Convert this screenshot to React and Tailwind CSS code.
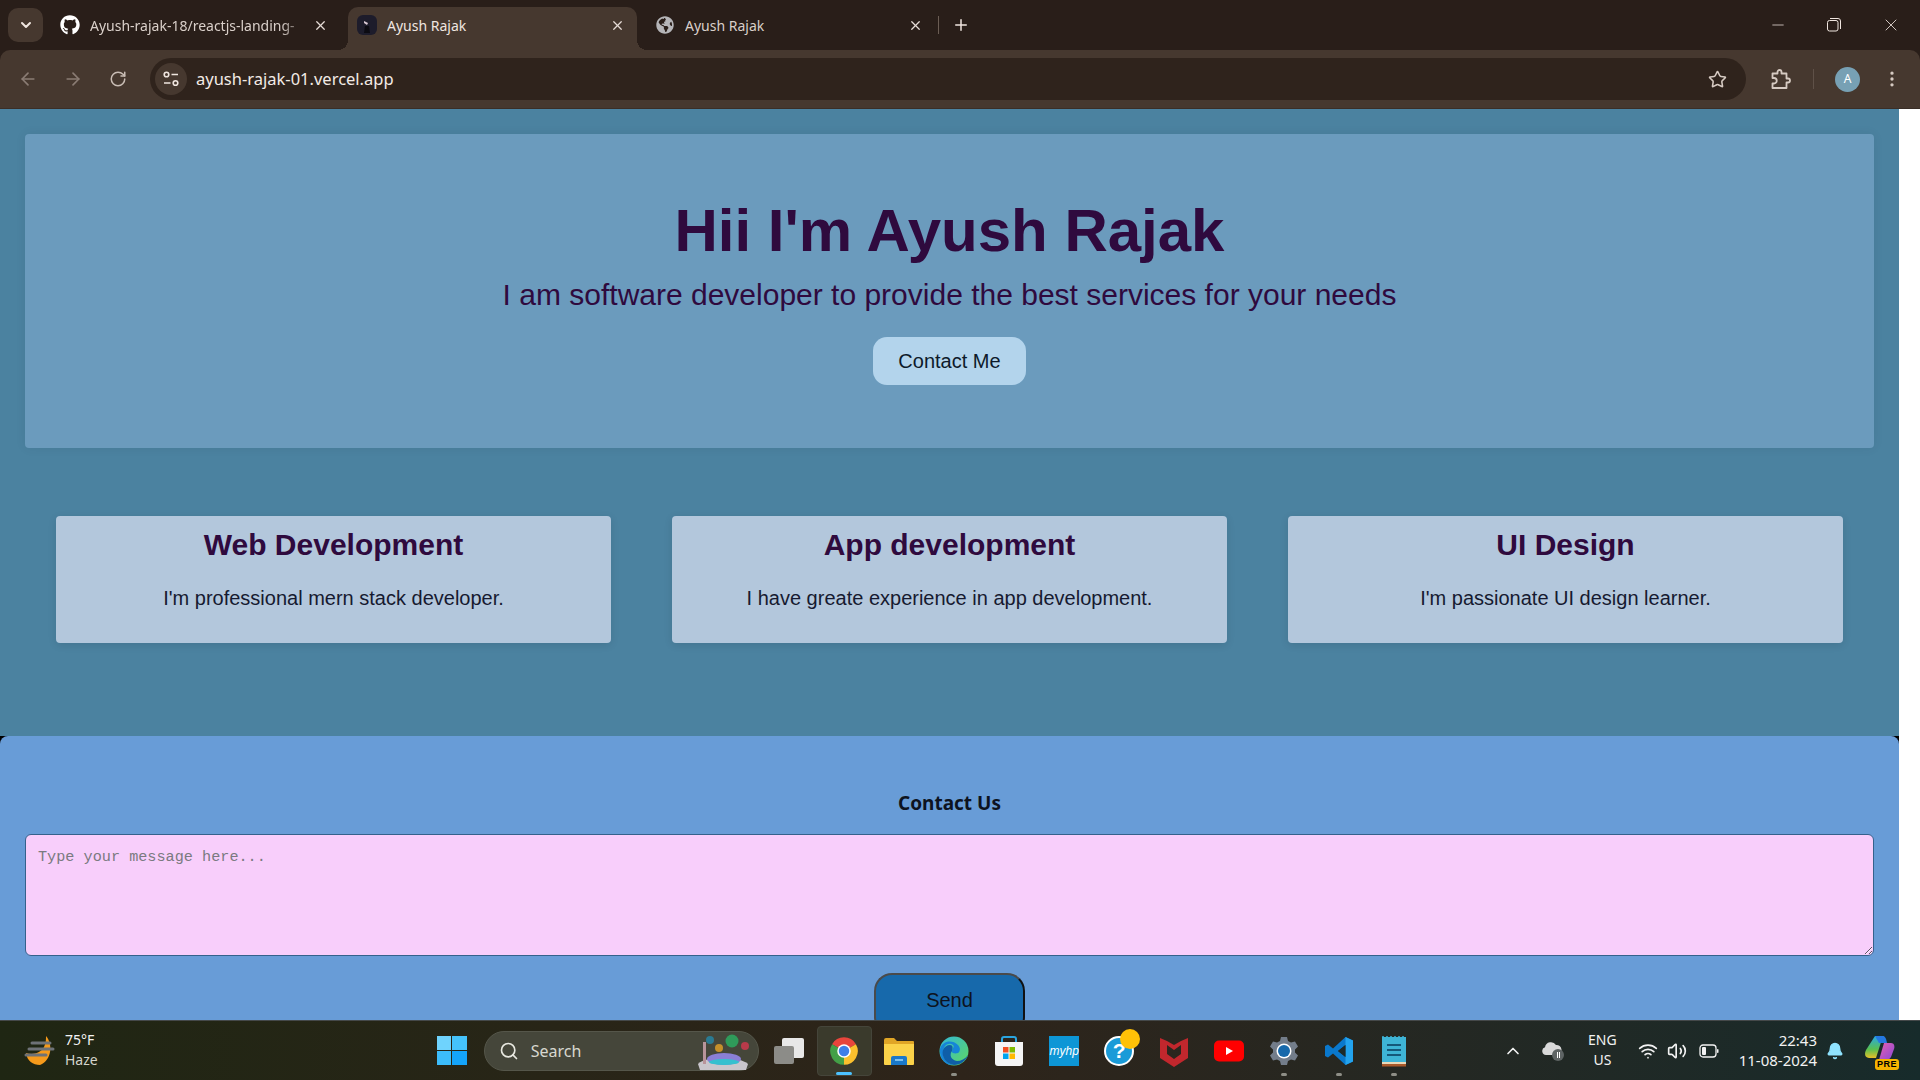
import React from "react";
import {
  ArrowLeft,
  ArrowRight,
  RotateCw,
  ChevronDown,
  ChevronUp,
  X,
  Plus,
  Minus,
  Star,
  EllipsisVertical,
  Search,
  Wifi,
  Volume2,
  Bell,
} from "lucide-react";
import { FaGithub, FaGlobeAmericas } from "react-icons/fa";

const cards = [
  { title: "Web Development", text: "I'm professional mern stack developer." },
  { title: "App development", text: "I have greate experience in app development." },
  { title: "UI Design", text: "I'm passionate UI design learner." },
];

function Tab({ icon, title, active, fade, className }) {
  return (
    <div
      className={`relative flex items-center h-[43px] pb-[7px] ${className} ${
        active ? "bg-[#46382f] rounded-t-[10px]" : ""
      }`}
    >
      <span className="w-[20px] h-[20px] flex items-center justify-center shrink-0">{icon}</span>
      <span
        className={`ml-[10px] text-[14px] flex-1 overflow-hidden whitespace-nowrap ${
          active ? "text-[#f0e6e0]" : "text-[#d9cfc9]"
        }`}
        style={fade ? { maskImage: "linear-gradient(to right, black 88%, transparent)" } : undefined}
      >
        {title}
      </span>
      <X size={15} strokeWidth={2} className="text-[#e6dcd6] shrink-0 ml-[6px]" />
      {active && (
        <>
          <span className="absolute bottom-0 left-[-10px] w-[10px] h-[10px] bg-[radial-gradient(circle_at_0_0,transparent_10px,#46382f_10px)]" />
          <span className="absolute bottom-0 right-[-10px] w-[10px] h-[10px] bg-[radial-gradient(circle_at_100%_0,transparent_10px,#46382f_10px)]" />
        </>
      )}
    </div>
  );
}

function TabFavicon() {
  return (
    <svg width="20" height="20" viewBox="0 0 20 20">
      <rect width="20" height="20" rx="6" fill="#1d1c2b" />
      <path d="M7 6l4 2-1 2-3-2z" fill="#d9c8d4" />
      <path d="M8 11h4l1 7H7z" fill="#0c0b12" />
    </svg>
  );
}

function SiteInfoIcon() {
  return (
    <svg width="18" height="18" viewBox="0 0 18 18" fill="none" stroke="#efe5df" strokeWidth="1.600">
      <circle cx="4.500" cy="4.500" r="2.300" />
      <path d="M9.500 4.500H16M2 13h6.500" />
      <circle cx="13.500" cy="13" r="2.300" />
    </svg>
  );
}

function ExtensionIcon() {
  return (
    <svg width="22" height="22" viewBox="0 0 22 22" fill="none" stroke="#d6cac2" strokeWidth="1.800" strokeLinejoin="round">
      <path d="M2.500 5.500h5V4a2 2 0 0 1 4 0v1.500h5v5H18a2 2 0 0 1 0 4h-1.500v5.500h-14v-4.500H4a2.500 2.500 0 0 0 0-5.500H2.500z" />
    </svg>
  );
}

function ChromeIcon() {
  return (
    <svg width="30" height="30" viewBox="0 0 24 24">
      <path d="M12 12L2.47 6.5A11 11 0 0 1 21.53 6.5Z" fill="#e8453c" />
      <path d="M12 12L21.53 6.5A11 11 0 0 1 12 23Z" fill="#fbc02d" />
      <path d="M12 12L12 23A11 11 0 0 1 2.47 6.5Z" fill="#43a047" />
      <circle cx="12" cy="12" r="5.4" fill="#fff" />
      <circle cx="12" cy="12" r="4.2" fill="#3f7fe8" />
    </svg>
  );
}

function FolderIcon() {
  return (
    <svg width="32" height="30" viewBox="0 0 32 30">
      <path d="M1 4a2 2 0 0 1 2-2h8l3 3h16a1 1 0 0 1 1 1v4H1z" fill="#e0a526" />
      <path d="M1 8h30v20a1 1 0 0 1-1 1H2a1 1 0 0 1-1-1z" fill="#fbd249" />
      <path d="M8 22a2 2 0 0 1 2-2h12a2 2 0 0 1 2 2v7H8z" fill="#1a78c9" />
      <rect x="12" y="23" width="8" height="2" fill="#7cc0f0" />
    </svg>
  );
}

function EdgeIcon() {
  return (
    <svg width="30" height="30" viewBox="0 0 30 30">
      <defs>
        <linearGradient id="edgeA" x1="0" y1="0" x2="1" y2="1">
          <stop offset="0" stopColor="#32b8d8" />
          <stop offset="1" stopColor="#5fd860" />
        </linearGradient>
      </defs>
      <circle cx="15" cy="15" r="14.5" fill="url(#edgeA)" />
      <path d="M1 13C3 5 13 3 19 9c3 3 2 7 0 8-3 1-6 0-6-1 0-4 3-5 1-7C10 6 4 9 4 17c0 6 5 11 11 12C7 30 0 23 1 13z" fill="#1684d8" />
      <path d="M13 15c-3 4-1 9 5 10 4 0 8-2 11-6-2 6-8 10-14 10-8-1-13-9-11-15 1-3 4-5 7-5 3 0 3 3 2 6z" fill="#0f5ea8" />
    </svg>
  );
}

function StoreIcon() {
  return (
    <svg width="30" height="32" viewBox="0 0 30 32">
      <path d="M8 7V4a2 2 0 0 1 2-2h10a2 2 0 0 1 2 2v3" fill="none" stroke="#2aa5e0" strokeWidth="2" />
      <path d="M1 7h28v21a3 3 0 0 1-3 3H4a3 3 0 0 1-3-3z" fill="#f5f5f5" />
      <rect x="9" y="12" width="5.5" height="5.5" fill="#f25022" />
      <rect x="15.5" y="12" width="5.5" height="5.5" fill="#7fba00" />
      <rect x="9" y="18.5" width="5.5" height="5.5" fill="#00a4ef" />
      <rect x="15.5" y="18.5" width="5.5" height="5.5" fill="#ffb900" />
    </svg>
  );
}

function HelpIcon() {
  return (
    <div className="relative w-[30px] h-[30px]">
      <div className="w-[30px] h-[30px] rounded-full bg-[#1a9bd8] border-[2px] border-white flex items-center justify-center text-white text-[21px] font-bold font-['Liberation_Sans',sans-serif]">
        ?
      </div>
      <div className="absolute -top-[7px] left-[16px] w-[20px] h-[20px] rounded-full bg-[#ffc107]" />
    </div>
  );
}

function McafeeIcon() {
  return (
    <svg width="28" height="32" viewBox="0 0 28 32">
      <path d="M0 3l7 3v13l7 5 7-5V6l7-3v20l-14 9L0 23z" fill="#c1272d" />
      <path d="M7 6l7 4 7-4v4l-7 5-7-5z" fill="#c1272d" />
    </svg>
  );
}

function YoutubeIcon() {
  return (
    <svg width="30" height="22" viewBox="0 0 30 22">
      <rect width="30" height="21" y="0.5" rx="5" fill="#f00" />
      <path d="M12 7l7 4-7 4z" fill="#fff" />
    </svg>
  );
}

function SettingsIcon() {
  return (
    <svg width="30" height="30" viewBox="0 0 30 30">
      <path
        d="M12 1h6l1 4 3 1.500 4-1 3 5-3 3v3l3 3-3 5-4-1-3 1.500-1 4h-6l-1-4-3-1.500-4 1-3-5 3-3v-3l-3-3 3-5 4 1 3-1.500z"
        fill="#737d8a"
      />
      <circle cx="15" cy="15" r="7.500" fill="#fff" />
      <circle cx="15" cy="15" r="6" fill="#1769ab" />
    </svg>
  );
}

function VscodeIcon() {
  return (
    <svg width="30" height="30" viewBox="0 0 30 30">
      <path d="M21.500 1L29 4.500v21L21.500 29 9 17.500l-5 4-3-1.500v-10l3-1.500 5 4z" fill="#0a78cc" />
      <path d="M21.500 9L14 15l7.500 6z" fill="#242a22" />
      <path d="M21.500 1L29 4.500v21L21.500 29z" fill="#23a3ee" />
      <path d="M21.500 9L14 15l7.500 6z" fill="#1d2a2a" />
    </svg>
  );
}

function NotepadIcon() {
  return (
    <svg width="24" height="32" viewBox="0 0 24 32">
      <rect x="0" y="2" width="24" height="27" fill="#3eb4d6" />
      <rect x="0" y="27" width="24" height="2" fill="#e8d8b8" />
      <rect x="0" y="29" width="24" height="2.500" fill="#a9592a" />
      <path d="M1 1v3M5 1v3M9 1v3M13 1v3M17 1v3M21 1v3" stroke="#3eb4d6" strokeWidth="1.500" />
      <path d="M5 10h14M5 15h14M5 20h14" stroke="#15587a" strokeWidth="2" />
    </svg>
  );
}

function WeatherIcon() {
  return (
    <svg width="32" height="32" viewBox="0 0 32 32">
      <path d="M22 1c7 8 6 24-6 29C9 30 3 26 2 18c6 2 14 1 18-6 2-4 2-8 2-11z" fill="#f59a1b" />
      <path d="M8 8h18M5 14h24M2 20h20" stroke="#6e7277" strokeWidth="3" strokeLinecap="round" />
    </svg>
  );
}

function SearchArt() {
  return (
    <svg width="58" height="38" viewBox="0 0 58 38">
      <path d="M4 32C10 24 46 24 54 32l-2 6H6z" fill="#c9c6cc" />
      <ellipse cx="30" cy="27" rx="17" ry="6" fill="#8a7fd6" />
      <ellipse cx="30" cy="30" rx="15" ry="3" fill="#36c0cf" />
      <rect x="9" y="10" width="3" height="22" fill="#b8949a" />
      <circle cx="16" cy="8" r="4" fill="#2a7a92" />
      <circle cx="25" cy="16" r="4" fill="#c58f2a" />
      <circle cx="38" cy="9" r="6.500" fill="#2f9a5a" />
      <circle cx="51" cy="14" r="4" fill="#b83a4a" />
    </svg>
  );
}

function CopilotIcon() {
  return (
    <div className="relative w-[32px] h-[32px]">
      <svg width="30" height="26" viewBox="0 0 30 26" className="absolute top-0 left-0">
        <defs>
          <linearGradient id="copA" x1="0" y1="0" x2="0" y2="1">
            <stop offset="0" stopColor="#28a8e8" />
            <stop offset="0.6" stopColor="#58c050" />
            <stop offset="1" stopColor="#e8c028" />
          </linearGradient>
          <linearGradient id="copB" x1="0" y1="0" x2="1" y2="1">
            <stop offset="0" stopColor="#e860b0" />
            <stop offset="1" stopColor="#8848d8" />
          </linearGradient>
        </defs>
        <path d="M10 1h8l-7 22H4C0 23-1 19 1 15z" fill="url(#copA)" />
        <path d="M19 8h7c3 0 4 3 3 6l-3 8c-1 2-3 3-5 3h-7z" fill="url(#copB)" />
        <path d="M10 1h8c2 0 3 2 4 7h-8z" fill="#2478e0" />
      </svg>
      <span className="absolute bottom-[-3px] right-[-2px] bg-[#f5b400] text-black rounded-[3px] text-[9px] leading-[11px] font-bold px-[2px] tracking-[0.5px] font-['Liberation_Sans',sans-serif]">
        PRE
      </span>
    </div>
  );
}

function BatteryIcon() {
  return (
    <svg width="20" height="14" viewBox="0 0 20 14">
      <rect x="1" y="1" width="16" height="12" rx="3" fill="none" stroke="#f2f2f2" strokeWidth="1.300" />
      <rect x="3" y="3" width="4" height="8" rx="1" fill="#f2f2f2" />
      <rect x="18" y="5" width="1.500" height="4" rx="0.700" fill="#f2f2f2" />
    </svg>
  );
}

function CloudIcon() {
  return (
    <div className="relative w-[22px] h-[20px]">
      <svg width="20" height="14" viewBox="0 0 20 14" className="absolute top-0 left-0">
        <path d="M4 14a4 4 0 0 1-1-7.800A6 6 0 0 1 14 4a4.500 4.500 0 0 1 1 10z" fill="#d9d9d9" />
      </svg>
      <span className="absolute right-0 bottom-0 w-[12px] h-[12px] rounded-full bg-[#5e6464] flex items-center justify-center gap-[1px]">
        <span className="w-[1px] h-[6px] bg-white" />
        <span className="w-[1px] h-[6px] bg-white" />
      </span>
    </div>
  );
}

function TaskbarApp({ children, active, running }) {
  return (
    <div
      className={`relative w-[55px] h-[50px] flex items-center justify-center rounded-[4px] ${
        active ? "bg-[#3a3a2c] border border-[#45453a]" : ""
      }`}
    >
      {children}
      {running && (
        <span
          className={`absolute bottom-0 h-[3px] rounded-full ${
            active ? "w-[16px] bg-[#4cc2ff]" : "w-[6px] bg-[#8e8e86]"
          }`}
        />
      )}
    </div>
  );
}

function BrowserChrome() {
  return (
    <header className="shrink-0 bg-[#291e19] font-['Noto_Sans',sans-serif]">
      <div className="h-[50px] flex items-end relative">
        <div className="absolute left-[8px] top-[8px] w-[35px] h-[34px] rounded-[10px] bg-[#46382f] flex items-center justify-center">
          <ChevronDown size={16} strokeWidth={3} className="text-[#f0e6e0]" />
        </div>
        <Tab
          icon={<FaGithub size={20} className="text-white" />}
          title="Ayush-rajak-18/reactjs-landing-"
          fade
          className="ml-[44px] w-[298px] pl-[16px] pr-[14px]"
        />
        <Tab icon={<TabFavicon />} title="Ayush Rajak" active className="ml-[6px] w-[289px] pl-[9px] pr-[12px]" />
        <Tab
          icon={<FaGlobeAmericas size={18} className="text-[#b5b5b8]" />}
          title="Ayush Rajak"
          className="ml-[10px] w-[289px] pl-[8px] pr-[13px]"
        />
        <div className="mb-[16px] w-[1px] h-[18px] bg-[#6b5d54] ml-[2px]" />
        <Plus size={18} strokeWidth={2} className="text-[#f0e6e0] ml-[13px] mb-[16px]" />
        <div className="ml-auto flex items-center h-full text-[#f0e6e0] pr-[19px] gap-[39px]">
          <Minus size={18} strokeWidth={1} />
          <svg width="16" height="16" viewBox="0 0 16 16" fill="none" stroke="currentColor">
            <rect x="1.500" y="3.500" width="10.500" height="10.500" rx="2" />
            <path d="M4 1.500h8a2.500 2.500 0 0 1 2.500 2.500v8" />
          </svg>
          <X size={20} strokeWidth={1} />
        </div>
      </div>
      <div className="h-[59px] bg-[#46382f] rounded-t-[10px] border-b border-[#3a2e27] flex items-center text-[#c9bdb5]">
        <ArrowLeft size={20} className="ml-[18px] text-[#8a7c74]" />
        <ArrowRight size={20} className="ml-[25px] text-[#8a7c74]" />
        <RotateCw size={18} className="ml-[26px]" />
        <div className="ml-[23px] w-[1596px] h-[42px] rounded-full bg-[#2f231c] flex items-center pl-[5px] pr-[19px]">
          <span className="w-[32px] h-[32px] rounded-full bg-[#46382f] flex items-center justify-center">
            <SiteInfoIcon />
          </span>
          <span className="ml-[9px] text-[16.500px] text-[#f3ebe6]">ayush-rajak-01.vercel.app</span>
          <Star size={19} strokeWidth={2} className="ml-auto text-[#d6cac2]" />
        </div>
        <span className="ml-[24px]">
          <ExtensionIcon />
        </span>
        <div className="ml-[21px] w-[1px] h-[20px] bg-[#5f5148]" />
        <span className="ml-[21px] w-[25px] h-[25px] rounded-full bg-[#77a0b4] flex items-center justify-center text-white text-[12px]">
          A
        </span>
        <EllipsisVertical size={20} className="ml-[22px] text-[#d6cac2]" />
      </div>
    </header>
  );
}

function Taskbar() {
  return (
    <footer className="shrink-0 h-[60px] border-t border-[#45494a] bg-gradient-to-r from-[#1f2613] via-[#2e241a] via-50% to-[#172b2b] flex items-center relative font-['Noto_Sans',sans-serif] text-[#f2f2f2]">
      <div className="ml-[24px] flex items-center">
        <WeatherIcon />
        <div className="ml-[9px] text-[14px] leading-[20px] pb-[2px]">
          <div>75°F</div>
          <div className="text-[#d4d4cc]">Haze</div>
        </div>
      </div>
      <div className="ml-[339px] grid grid-cols-2 gap-[1.500px] w-[30px] h-[29px]">
        <span className="bg-[#6fd3fd]" />
        <span className="bg-[#45c3fb]" />
        <span className="bg-[#3cbdfb]" />
        <span className="bg-[#14a4fa]" />
      </div>
      <div className="ml-[17px] w-[275px] h-[40px] rounded-full bg-[#45463a] border border-[#55564a] flex items-center pl-[14px] pr-[6px]">
        <Search size={20} strokeWidth={2} className="text-[#e8e8e0]" />
        <span className="ml-[12px] text-[16px] text-[#d8d8d0]">Search</span>
        <span className="ml-auto">
          <SearchArt />
        </span>
      </div>
      <div className="ml-[3px] flex items-center">
        <TaskbarApp>
          <div className="relative w-[30px] h-[26px]">
            <div className="absolute right-0 top-0 w-[22px] h-[20px] bg-[#e8e8e8] rounded-[2px]" />
            <div className="absolute left-0 bottom-0 w-[20px] h-[18px] bg-[#8c8c88] rounded-[2px]" />
          </div>
        </TaskbarApp>
        <TaskbarApp active running>
          <ChromeIcon />
        </TaskbarApp>
        <TaskbarApp>
          <FolderIcon />
        </TaskbarApp>
        <TaskbarApp running>
          <EdgeIcon />
        </TaskbarApp>
        <TaskbarApp>
          <StoreIcon />
        </TaskbarApp>
        <TaskbarApp>
          <div className="w-[30px] h-[30px] bg-[#0d96d6] flex items-center justify-center text-white text-[12px] italic font-['Liberation_Sans',sans-serif]">
            myhp
          </div>
        </TaskbarApp>
        <TaskbarApp>
          <HelpIcon />
        </TaskbarApp>
        <TaskbarApp>
          <McafeeIcon />
        </TaskbarApp>
        <TaskbarApp>
          <YoutubeIcon />
        </TaskbarApp>
        <TaskbarApp running>
          <SettingsIcon />
        </TaskbarApp>
        <TaskbarApp running>
          <VscodeIcon />
        </TaskbarApp>
        <TaskbarApp running>
          <NotepadIcon />
        </TaskbarApp>
      </div>
      <div className="ml-auto flex items-center pr-[23px]">
        <ChevronUp size={20} strokeWidth={2} />
        <span className="ml-[19px]">
          <CloudIcon />
        </span>
        <div className="ml-[24px] text-[14px] leading-[20px] text-center pb-[2px]">
          <div>ENG</div>
          <div>US</div>
        </div>
        <Wifi size={20} className="ml-[21px]" />
        <Volume2 size={20} className="ml-[9px]" />
        <span className="ml-[12px]">
          <BatteryIcon />
        </span>
        <div className="ml-[20px] text-[15px] leading-[20px] text-right pb-[2px]">
          <div>22:43</div>
          <div>11-08-2024</div>
        </div>
        <Bell size={18} className="ml-[9px] text-[#8fe3ff] fill-[#8fe3ff]" />
        <span className="ml-[21px]">
          <CopilotIcon />
        </span>
      </div>
    </footer>
  );
}

function App() {
  return (
    <div className="w-screen h-screen overflow-hidden flex flex-col bg-white">
      <BrowserChrome />
      <div className="flex-1 min-h-0 overflow-hidden">
        <main className="w-[1899px] font-['Liberation_Sans',Arial,sans-serif]">
          <section className="bg-[#4b82a0] pt-[25px] pb-[93px] px-[25px]">
            <div className="h-[314px] rounded-[4px] bg-[#6b9bbd] flex flex-col items-center pt-[62px] shadow-[0_0_12px_rgba(0,0,0,0.06)]">
              <h1 className="text-[60px] leading-[70px] font-bold text-[#2f0a3e]">Hii I'm Ayush Rajak</h1>
              <p className="mt-[12px] text-[30px] leading-[34px] text-[#2f0a3e]">
                I am software developer to provide the best services for your needs
              </p>
              <button className="mt-[25px] w-[153px] h-[48px] rounded-[14px] bg-[#b3d4ec] text-[20px] text-[#0d1a2a]">
                Contact Me
              </button>
            </div>
            <div className="mt-[68px] px-[31px] grid grid-cols-3 gap-[61px]">
              {cards.map((card) => (
                <div
                  key={card.title}
                  className="h-[127px] rounded-[4px] bg-[#b3c7dc] flex flex-col items-center pt-[11px] shadow-[0_2px_8px_rgba(0,0,0,0.1)]"
                >
                  <h2 className="text-[30px] leading-[35px] font-bold text-[#2f0a3e]">{card.title}</h2>
                  <p className="mt-[25px] text-[20px] leading-[23px] text-[#161a30]">{card.text}</p>
                </div>
              ))}
            </div>
          </section>
          <div className="bg-black">
            <section className="bg-[#689cd7] rounded-t-[8px] px-[25px] pt-[55px]">
              <h3 className="text-center text-[19px] leading-[24px] font-bold text-[#0d1320] font-['Noto_Sans',sans-serif]">
                Contact Us
              </h3>
              <textarea
                placeholder="Type your message here..."
                className="mt-[19px] block w-full h-[122px] rounded-[6px] border border-[#35618c] bg-[#f8cefb] px-[12px] py-[12px] font-['Liberation_Mono',monospace] text-[15.200px] leading-[20px] placeholder:text-[#7a7a80]"
              />
              <div className="mt-[17px] flex justify-center pb-[40px]">
                <button className="w-[151px] h-[62px] rounded-[18px] border-2 border-t-[#4a4a4a] border-l-[#4a4a4a] border-r-[#111] border-b-[#111] bg-[#1769ab] text-[20px] leading-[50px] text-[#0d1320] pb-[15px]">
                  Send
                </button>
              </div>
            </section>
          </div>
        </main>
      </div>
      <Taskbar />
    </div>
  );
}

export default App;
